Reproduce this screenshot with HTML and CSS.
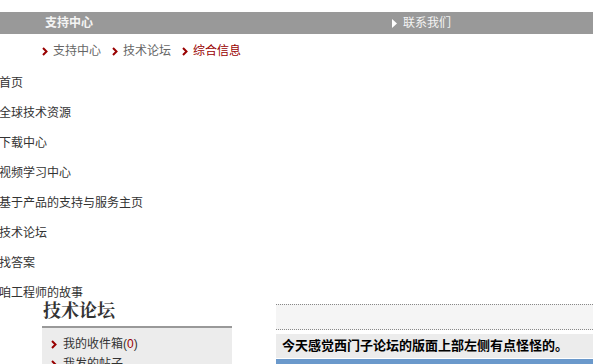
FILE: index.html
```
<!DOCTYPE html>
<html lang="zh-cn">
<head>
    <meta charset="UTF-8">
    <title>技术论坛 - 综合信息</title>
    <link rel="stylesheet" href="styles.css">
</head>
<body>

    <!-- 顶部灰条 -->
    <div class="topbar">
        <div class="topbar-title">支持中心</div>
        <div class="topbar-link">
            <svg class="tri" width="5" height="9" viewBox="0 0 5 9"><path d="M0 0 L5 4.5 L0 9 Z" fill="#fff"/></svg>
            联系我们
        </div>
    </div>

    <!-- 面包屑 -->
    <div class="crumbs">
        <span class="crumb"><svg class="chev" width="6" height="9" viewBox="0 0 6 9"><path d="M1 1 L4.5 4.5 L1 8" stroke="#990000" stroke-width="2" fill="none"/></svg>支持中心</span>
        <span class="crumb"><svg class="chev" width="6" height="9" viewBox="0 0 6 9"><path d="M1 1 L4.5 4.5 L1 8" stroke="#990000" stroke-width="2" fill="none"/></svg>技术论坛</span>
        <span class="crumb current"><svg class="chev" width="6" height="9" viewBox="0 0 6 9"><path d="M1 1 L4.5 4.5 L1 8" stroke="#990000" stroke-width="2" fill="none"/></svg>综合信息</span>
    </div>

    <!-- 主菜单 -->
    <ul class="menu">
        <li>首页</li>
        <li>全球技术资源</li>
        <li>下载中心</li>
        <li>视频学习中心</li>
        <li>基于产品的支持与服务主页</li>
        <li>技术论坛</li>
        <li>找答案</li>
        <li>咱工程师的故事</li>
    </ul>

    <div class="main">
        <div class="side">
            <h2>技术论坛</h2>
            <ul class="side-list">
                <li><svg class="chev" width="6" height="9" viewBox="0 0 6 9"><path d="M1 1 L4.5 4.5 L1 8" stroke="#990000" stroke-width="2" fill="none"/></svg><span>我的收件箱(<span class="num">0</span>)</span></li>
                <li><svg class="chev" width="6" height="9" viewBox="0 0 6 9"><path d="M1 1 L4.5 4.5 L1 8" stroke="#990000" stroke-width="2" fill="none"/></svg><span>我发的帖子</span></li>
            </ul>
        </div>
        <div class="content">
            <div class="toolbar"></div>
            <div class="post-title">今天感觉西门子论坛的版面上部左侧有点怪怪的。</div>
            <div class="post-bar"></div>
        </div>
    </div>

</body>
</html>
```

FILE: styles.css
```
body {
    margin: 0;
    font-family: "Liberation Sans", "Noto Sans CJK SC", sans-serif;
    font-size: 12px;
    color: #333;
    background: #fff;
    overflow: hidden;
}
ul {
    list-style: none;
    margin: 0;
    padding: 0;
}
.topbar {
    margin-top: 12px;
    width: 593px;
    height: 22px;
    background: #999;
    color: #f4f4f4;
    display: grid;
    grid-template-columns: 392px 1fr;
    align-items: center;
    line-height: 22px;
}
.topbar-title {
    padding-left: 45px;
    font-weight: bold;
}
.topbar-link {
    display: flex;
    align-items: center;
    gap: 6px;
}
.crumbs {
    display: flex;
    gap: 11px;
    padding-left: 42px;
    margin-top: 9px;
    height: 16px;
    line-height: 16px;
    color: #666;
}
.crumb {
    display: flex;
    align-items: center;
    gap: 5px;
}
.crumb.current {
    color: #990000;
}
.menu {
    margin-top: 18px;
    margin-left: -1px;
    display: flex;
    flex-direction: column;
    gap: 18px;
    line-height: 12px;
}
.main {
    display: flex;
    gap: 44px;
    padding-left: 42px;
}
.side {
    width: 190px;
}
.side h2 {
    margin: 0 0 7px 1px;
    font-size: 18px;
    line-height: 20px;
    font-family: "Noto Serif CJK SC", "Noto Sans CJK SC", serif;
    font-weight: bold;
    color: #333;
}
.side-list {
    background: #ececec;
    border-top: 2px solid #999;
    padding: 6px 0 0 9px;
    height: 60px;
}
.side-list li {
    display: flex;
    align-items: center;
    gap: 6px;
    line-height: 20px;
}
.num {
    color: #990000;
}
.content {
    width: 317px;
    padding-top: 5px;
}
.toolbar {
    height: 24px;
    background: #f5f5f5;
    border-top: 1px dotted #888;
    border-bottom: 1px dotted #888;
}
.post-title {
    margin-top: 4px;
    height: 24px;
    line-height: 24px;
    background: #ececec;
    padding-left: 6px;
    font-weight: bold;
    font-size: 13px;
    color: #000;
}
.post-bar {
    margin-top: 1px;
    height: 10px;
    background: #6b99cb;
}
```
